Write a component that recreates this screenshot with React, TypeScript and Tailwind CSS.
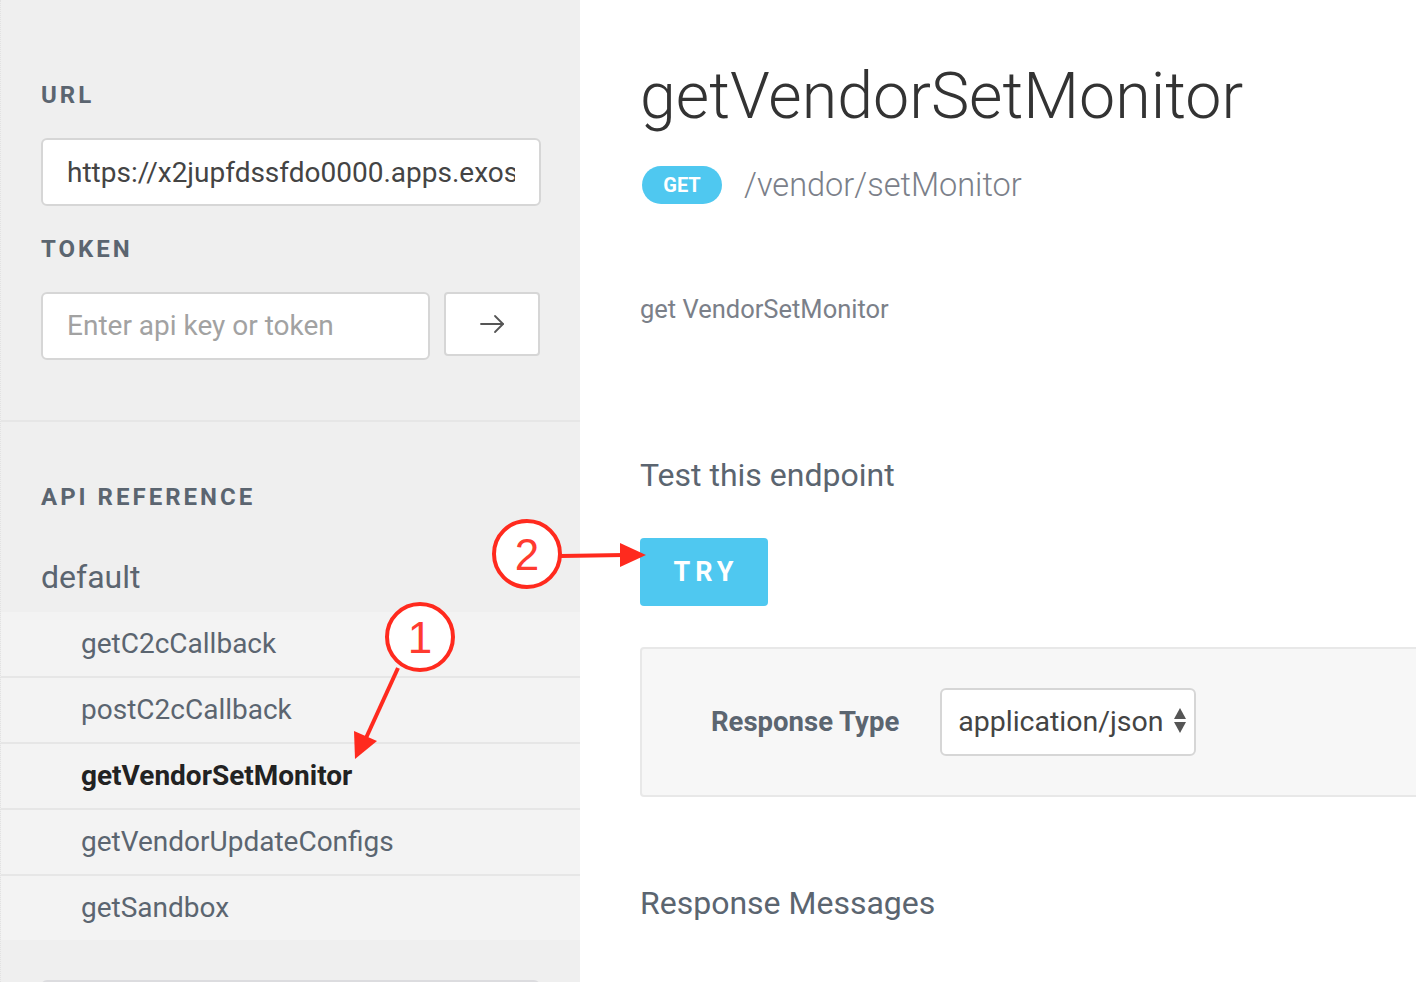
import React from "react";

const items = [
  { name: "getC2cCallback", active: false },
  { name: "postC2cCallback", active: false },
  { name: "getVendorSetMonitor", active: true },
  { name: "getVendorUpdateConfigs", active: false },
  { name: "getSandbox", active: false },
];

function Annotations() {
  return (
    <svg
      className="absolute left-0 top-0 pointer-events-none"
      width="1416"
      height="982"
      viewBox="0 0 1416 982"
    >
      {/* annotation 2 */}
      <line x1="561" y1="556" x2="624" y2="555" stroke="#ff2a1e" strokeWidth="4" />
      <polygon points="646,555 620,543 620,567" fill="#ff2a1e" />
      <circle cx="527" cy="554" r="33" fill="#ffffff" stroke="#ff2a1e" strokeWidth="4" />
      <text
        x="527"
        y="570"
        textAnchor="middle"
        fontFamily="'Liberation Sans', Arial, sans-serif"
        fontSize="44"
        fill="#ff3b30"
      >
        2
      </text>
      {/* annotation 1 */}
      <line x1="398" y1="668" x2="366" y2="738" stroke="#ff2a1e" strokeWidth="4" />
      <polygon points="355,759 354,731 377,741" fill="#ff2a1e" />
      <circle cx="420" cy="637" r="33" fill="#ffffff" stroke="#ff2a1e" strokeWidth="4" />
      <text
        x="420"
        y="653"
        textAnchor="middle"
        fontFamily="'Liberation Sans', Arial, sans-serif"
        fontSize="44"
        fill="#ff3b30"
      >
        1
      </text>
    </svg>
  );
}

export default function App() {
  return (
    <div className="relative flex h-[982px] w-[1416px] overflow-hidden bg-white font-['Roboto',sans-serif]">
      {/* Sidebar */}
      <aside className="flex w-[580px] shrink-0 flex-col overflow-hidden bg-[#efefef] border-l border-dotted border-[#e2e2e2]">
        <div className="flex h-[422px] shrink-0 flex-col border-b-2 border-[#e6e6e6] px-[40px] pt-[80px]">
          <div className="text-[24px] font-bold leading-[30px] tracking-[3px] text-[#5b6570]">URL</div>
          <input
            readOnly
            value="https://x2jupfdssfdo0000.apps.exosite.io"
            className="mt-[28px] h-[68px] w-[500px] shrink-0 rounded-[6px] border-2 border-[#d6d6d6] bg-white pl-[24px] pr-[24px] text-[28px] text-[#444] outline-none"
          />
          <div className="mt-[28px] text-[24px] font-bold leading-[30px] tracking-[3px] text-[#5b6570]">TOKEN</div>
          <div className="mt-[28px] flex shrink-0 items-start gap-[14px]">
            <div className="flex h-[68px] w-[390px] items-center rounded-[6px] border-2 border-[#d6d6d6] bg-white pl-[24px]">
              <span className="text-[28px] text-[#a2a2a2]">Enter api key or token</span>
            </div>
            <div className="flex h-[64px] w-[96px] items-center justify-center rounded-[4px] border-2 border-[#d6d6d6] bg-white">
              <svg width="26" height="20" viewBox="0 0 26 20" fill="none" stroke="#555" strokeWidth="1.8" strokeLinecap="round" strokeLinejoin="round">
                <line x1="2" y1="10" x2="24" y2="10" />
                <polyline points="16,2 24,10 16,18" />
              </svg>
            </div>
          </div>
        </div>

        <div className="mt-[60px] shrink-0 px-[40px] text-[24px] font-bold leading-[30px] tracking-[3px] text-[#5b6570]">
          API REFERENCE
        </div>
        <div className="mt-[44px] shrink-0 px-[40px] text-[32px] leading-[42px] text-[#5b6570]">default</div>
        <ul className="mt-[14px] shrink-0 bg-[#f3f3f3]">
          {items.map((it, i) => (
            <li
              key={it.name}
              className={`flex h-[64px] items-center pl-[80px] text-[28px] ${
                i > 0 ? "box-content border-t-2 border-[#e6e6e6]" : ""
              } ${it.active ? "font-bold text-[#222]" : "text-[#5b6570]"}`}
            >
              {it.name}
            </li>
          ))}
        </ul>
        <div className="mx-[40px] mt-[40px] h-[60px] shrink-0 rounded-[6px] border-2 border-[#dcdcdf] bg-[#f3f3f3]" />
      </aside>

      {/* Main */}
      <main className="flex min-w-0 flex-1 flex-col pl-[60px] pt-[58px]">
        <h1 className="whitespace-nowrap text-[64.5px] font-light leading-[76px] text-[#333]">getVendorSetMonitor</h1>
        <div className="mt-[32px] flex h-[38px] shrink-0 items-center">
          <span className="ml-[2px] flex h-[38px] w-[80px] items-center justify-center rounded-full bg-[#4fc8f0] text-[20px] font-bold text-white">
            GET
          </span>
          <span className="ml-[22px] text-[32.5px] font-light text-[#7b8089]">/vendor/setMonitor</span>
        </div>
        <p className="mt-[90px] text-[25.5px] leading-[30px] text-[#7b8089]">get VendorSetMonitor</p>
        <h2 className="mt-[131px] text-[32px] leading-[40px] text-[#5b6570]">Test this endpoint</h2>
        <div className="mt-[43px] shrink-0">
          <button className="flex h-[68px] w-[128px] items-center justify-center rounded-[4px] bg-[#4fc8f0] pl-[4px] text-[27px] font-bold tracking-[5px] text-white">
            TRY
          </button>
        </div>
        <div className="mt-[41px] flex h-[150px] w-[900px] shrink-0 items-center rounded-[4px] border-2 border-[#e8e8e8] bg-[#f7f7f7] pl-[69px]">
          <span className="text-[27.5px] font-bold text-[#5b6570]">Response Type</span>
          <div className="ml-[41px] flex h-[68px] w-[256px] items-center justify-between rounded-[6px] border-2 border-[#d6d6d6] bg-white pl-[16px] pr-[8px]">
            <span className="text-[28.5px] text-[#444]">application/json</span>
            <svg width="12" height="28" viewBox="0 0 12 28" fill="#555">
              <polygon points="6,0 12,11 0,11" />
              <polygon points="0,14 12,14 6,25" />
            </svg>
          </div>
        </div>
        <h2 className="mt-[86px] text-[32px] leading-[40px] text-[#5b6570]">Response Messages</h2>
      </main>

      <Annotations />
    </div>
  );
}
